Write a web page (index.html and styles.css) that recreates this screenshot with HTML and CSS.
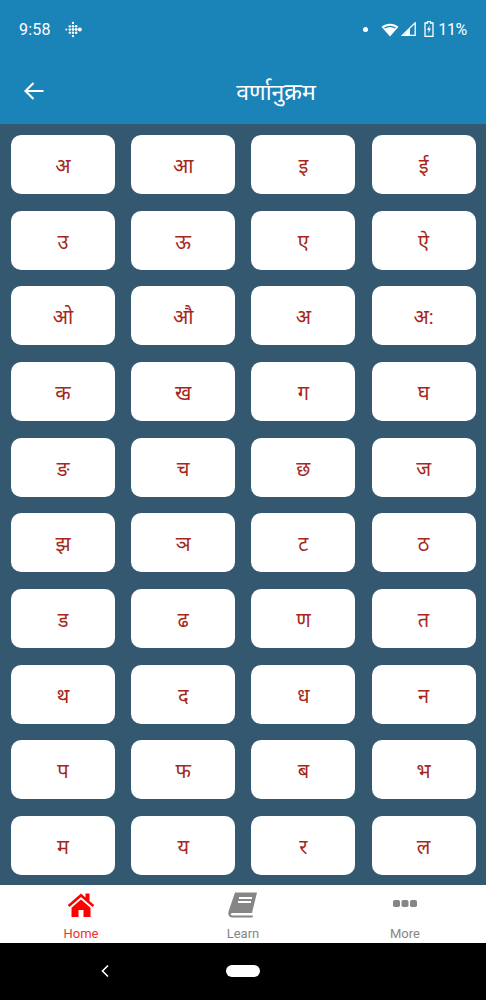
FILE: index.html
```html
<!DOCTYPE html>
<html lang="hi">
<head>
<meta charset="utf-8">
<title>वर्णानुक्रम</title>
<link rel="stylesheet" href="styles.css">
</head>
<body>
<div class="screen">
  <header class="top">
    <div class="status">
      <span class="time">9:58</span>
      <svg class="fitbit" width="17" height="17" viewBox="0 0 16 16" fill="#fff"><circle cx="1.200" cy="8" r=".9"/><circle cx="4.500" cy="5" r="1.100"/><circle cx="4.500" cy="8" r="1.200"/><circle cx="4.500" cy="11" r="1.100"/><circle cx="7.500" cy="1.800" r="1.100"/><circle cx="7.500" cy="5" r="1.200"/><circle cx="7.500" cy="8" r="1.300"/><circle cx="7.500" cy="11" r="1.200"/><circle cx="7.500" cy="14.200" r="1.100"/><circle cx="10.500" cy="5" r="1.200"/><circle cx="10.500" cy="8" r="1.400"/><circle cx="10.500" cy="11" r="1.200"/><circle cx="14" cy="8" r="1.800"/></svg>
      <span class="spacer"></span>
      <span class="dot"></span>
      <svg class="wifi" width="18" height="15" viewBox="0 0 18 15"><path d="M.5 4.800C5.300.6 12.700.6 17.500 4.800L9 14.500z" fill="#fff"/><path d="M3.500 6c3.300-2 7.700-2 11 0" fill="none" stroke="#1a84b8" stroke-width="1.200"/></svg>
      <svg class="signal" width="15" height="14" viewBox="0 0 15 14"><path d="M14.200 .8V13.400H1.200z" fill="none" stroke="#fff" stroke-width="1.300"/><path d="M9 6V13.400H2.500z" fill="#fff"/></svg>
      <svg class="battery" width="10" height="16" viewBox="0 0 10 16"><path d="M3.500 .5h3v1.500h2.500v13.500H1V2h2.500z" fill="none" stroke="#fff" stroke-width="1.300"/><path d="M5.800 4L3 9h1.800l-.6 3.500L7 7.500H5.200z" fill="#fff"/></svg>
      <span class="pct">11%</span>
    </div>
    <div class="bar">
      <svg class="back" width="20" height="18" viewBox="0 0 20 18"><path d="M19.500 9H2M9.500 1L1.500 9l8 8" fill="none" stroke="#fff" stroke-width="2.100"/></svg>
      <h1 class="title">वर्णानुक्रम</h1>
    </div>
  </header>
  <main class="grid">
    <button class="key">अ</button><button class="key">आ</button><button class="key">इ</button><button class="key">ई</button>
    <button class="key">उ</button><button class="key">ऊ</button><button class="key">ए</button><button class="key">ऐ</button>
    <button class="key">ओ</button><button class="key">औ</button><button class="key">अ</button><button class="key">अ:</button>
    <button class="key">क</button><button class="key">ख</button><button class="key">ग</button><button class="key">घ</button>
    <button class="key">ङ</button><button class="key">च</button><button class="key">छ</button><button class="key">ज</button>
    <button class="key">झ</button><button class="key">ञ</button><button class="key">ट</button><button class="key">ठ</button>
    <button class="key">ड</button><button class="key">ढ</button><button class="key">ण</button><button class="key">त</button>
    <button class="key">थ</button><button class="key">द</button><button class="key">ध</button><button class="key">न</button>
    <button class="key">प</button><button class="key">फ</button><button class="key">ब</button><button class="key">भ</button>
    <button class="key">म</button><button class="key">य</button><button class="key">र</button><button class="key">ल</button>
  </main>
  <nav class="tabs">
    <div class="tab active">
      <svg class="tab-icon" width="28" height="26" viewBox="0 0 28 26"><path d="M14 1.500L.8 13l1.700 2L14 5l11.500 10 1.700-2L22.500 8.900V1.500h-4v3.900z" fill="#f00"/><path d="M14 7.500L4.500 15.800V25h7v-7h5v7h7v-9.200z" fill="#f00"/></svg>
      <span>Home</span>
    </div>
    <div class="tab">
      <svg class="tab-icon" width="30" height="26" viewBox="0 0 30 26"><path d="M7 .5H29L24 21H5C2.500 21 1.500 23 4.500 23.500H25L24.500 25.500H4C.5 25.500-.3 22 .8 18.500z" fill="#868686"/><path d="M11 6h13M10 10h13" stroke="#fff" stroke-width="1.800"/></svg>
      <span>Learn</span>
    </div>
    <div class="tab">
      <svg class="tab-icon" width="26" height="26" viewBox="0 0 26 26" fill="#868686"><rect x="1" y="8" width="7" height="7" rx="1.800"/><rect x="9.500" y="8" width="7" height="7" rx="1.800"/><rect x="18" y="8" width="7" height="7" rx="1.800"/></svg>
      <span>More</span>
    </div>
  </nav>
  <footer class="sysnav">
    <svg class="chev" width="10" height="14" viewBox="0 0 10 14"><path d="M8 1.500L2.500 7 8 12.500" fill="none" stroke="#fff" stroke-width="1.600"/></svg>
    <span class="pill"></span>
  </footer>
</div>
</body>
</html>
```
FILE: styles.css
```css
* { box-sizing: border-box; }
html, body { margin: 0; padding: 0; }
body { font-family: "Roboto", "Noto Sans", sans-serif; }
.screen { width: 486px; height: 1000px; display: flex; flex-direction: column; overflow: hidden; background: #000; }
.top { height: 124px; background: #1a84b8; color: #fff; flex: none; }
.status { height: 58px; padding: 0 19px; display: flex; align-items: center; font-size: 16px; font-weight: 400; }
.time { width: 38px; letter-spacing: .2px; }
.fitbit { margin-left: 8px; }
.spacer { flex: 1; }
.dot { width: 5px; height: 5px; border-radius: 50%; background: #fff; margin-right: 13px; }
.wifi { margin-right: 2px; }
.signal { margin-right: 8px; }
.battery { margin-right: 4px; }
.pct { letter-spacing: -.3px; }
.bar { height: 66px; display: flex; align-items: center; justify-content: center; position: relative; }
.back { position: absolute; left: 24px; top: 24px; }
.title { margin: 0 0 0 66px; font-size: 23px; font-weight: 400; color: #fff; }
.grid { height: 761px; flex: none; background: #34586f; padding: 11px 10px 0 11px; display: grid; grid-template-columns: repeat(4, 104px); grid-auto-rows: 59px; column-gap: 16.2px; row-gap: 16.67px; align-content: start; }
.key { border: 0; padding: 2px 0 0; border-radius: 10px; background: #fff; color: #a5281b; font-family: inherit; font-size: 20px; display: flex; align-items: center; justify-content: center; }
.tabs { height: 58px; flex: none; background: #fff; display: grid; grid-template-columns: repeat(3, 1fr); color: #868686; }
.tab { display: flex; flex-direction: column; align-items: center; padding-top: 7px; font-size: 13px; line-height: 14px; gap: 9px; }
.tab-icon { display: block; }
.active { color: #ee3030; }
.sysnav { flex: 1; background: #000; display: flex; align-items: center; justify-content: center; position: relative; padding-bottom: 1px; }
.chev { position: absolute; left: 100px; top: 21px; }
.pill { width: 34px; height: 12px; border-radius: 6px; background: #fff; }
```
